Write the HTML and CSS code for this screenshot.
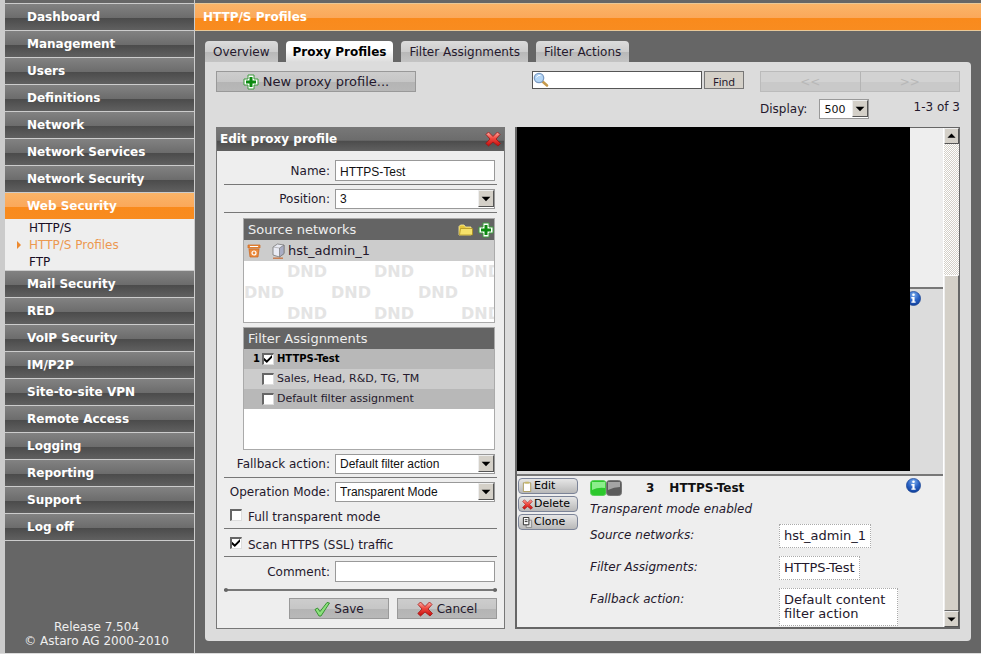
FILE: index.html
```html
<!DOCTYPE html>
<html lang="en">
<head>
<meta charset="utf-8">
<title>HTTP/S Profiles</title>
<link rel="stylesheet" href="styles.css">
</head>
<body>
<svg class="defs" width="0" height="0" aria-hidden="true">
  <defs>
    <linearGradient id="red" x1="0" y1="0" x2="0" y2="1"><stop offset="0" stop-color="#ffb0a8"/><stop offset=".45" stop-color="#f04a40"/><stop offset="1" stop-color="#c40c0c"/></linearGradient>
    <radialGradient id="blue" cx=".5" cy=".25" r=".8"><stop offset="0" stop-color="#7fb0ee"/><stop offset=".5" stop-color="#2a62c4"/><stop offset="1" stop-color="#0c3a94"/></radialGradient>
    <symbol id="plus" viewBox="0 0 16 16"><path d="M5 1h6v4h4v6h-4v4H5v-4H1V5h4z" fill="#fff" stroke="#3c9a3c"/><path d="M6.500 3h3v3.500H13v3H9.500V13h-3V9.500H3v-3h3.500z" fill="#0c8a10"/></symbol>
    <symbol id="cross" viewBox="0 0 16 16"><path d="M1 3.500 3.500 1 8 5.500 12.500 1 15 3.500 11 8l4.500 4.500-2.500 2.500L8 11l-4.500 4L.8 12.500 5 8z" fill="url(#red)" stroke="#a01414" stroke-width=".8" stroke-linejoin="round"/></symbol>
    <symbol id="info" viewBox="0 0 14 14"><circle cx="7" cy="7" r="6.600" fill="url(#blue)" stroke="#123f90" stroke-width=".6"/><circle cx="7" cy="3.500" r="1.200" fill="#fff"/><path d="M5 5.700h3v4h1v1.200H5V9.700h1V6.900H5z" fill="#fff"/></symbol>
    <symbol id="arrow" viewBox="0 0 16 16"><path d="M3 6h10l-5 5z" fill="#000"/></symbol>
  </defs>
</svg>
<div class="app">
  <nav class="sidebar">
    <ul class="menu">
      <li><a href="#">Dashboard</a></li>
      <li><a href="#">Management</a></li>
      <li><a href="#">Users</a></li>
      <li><a href="#">Definitions</a></li>
      <li><a href="#">Network</a></li>
      <li><a href="#">Network Services</a></li>
      <li><a href="#">Network Security</a></li>
      <li><a href="#" class="current">Web Security</a>
        <ul class="submenu">
          <li><a href="#">HTTP/S</a></li>
          <li><a href="#" class="active">HTTP/S Profiles</a></li>
          <li><a href="#">FTP</a></li>
        </ul>
      </li>
      <li><a href="#">Mail Security</a></li>
      <li><a href="#">RED</a></li>
      <li><a href="#">VoIP Security</a></li>
      <li><a href="#">IM/P2P</a></li>
      <li><a href="#">Site-to-site VPN</a></li>
      <li><a href="#">Remote Access</a></li>
      <li><a href="#">Logging</a></li>
      <li><a href="#">Reporting</a></li>
      <li><a href="#">Support</a></li>
      <li><a href="#">Log off</a></li>
    </ul>
    <footer class="release">Release 7.504<br>© Astaro AG 2000-2010</footer>
  </nav>
  <main class="main">
    <h1 class="title">HTTP/S Profiles</h1>
    <nav class="tabs">
      <a href="#">Overview</a>
      <a href="#" class="selected">Proxy Profiles</a>
      <a href="#">Filter Assignments</a>
      <a href="#">Filter Actions</a>
    </nav>
    <section class="panel">
      <div class="toolbar">
        <button class="btn new" type="button"><svg class="ico"><use href="#plus"/></svg>New proxy profile...</button>
        <form class="search">
          <span class="searchbox">
            <svg viewBox="0 0 16 16"><path d="m9.500 9.500 4.500 4" stroke="#c69a4c" stroke-width="2.600" stroke-linecap="round"/><circle cx="6" cy="6" r="4.700" fill="#b4d6f6" stroke="#7c9cc4" stroke-width="1.300"/><path d="M3.500 5.500q1-2.500 4-2.200" fill="none" stroke="#fff"/></svg>
            <input type="text" aria-label="Search">
          </span>
          <button type="submit">Find</button>
        </form>
        <div class="paging">
          <div class="pager"><button type="button" disabled>&lt;&lt;</button><button type="button" disabled>&gt;&gt;</button></div>
          <div class="display">
            <label for="display">Display:</label>
            <span class="select small"><select id="display"><option>500</option></select><svg><use href="#arrow"/></svg></span>
            <span class="count">1-3 of 3</span>
          </div>
        </div>
      </div>
      <div class="columns">
        <form class="edit">
          <header class="edit-head"><h2>Edit proxy profile</h2><button type="button" aria-label="Close"><svg class="ico"><use href="#cross"/></svg></button></header>
          <div class="edit-body">
            <div class="row"><label for="name">Name:</label><input class="text" id="name" type="text" value="HTTPS-Test"></div>
            <div class="row"><label for="position">Position:</label><span class="select"><select id="position"><option>3</option></select><svg><use href="#arrow"/></svg></span></div>
            <div class="boxes">
              <section class="box">
                <header><h3>Source networks</h3>
                  <button type="button" aria-label="Browse"><svg class="ico" viewBox="0 0 16 16"><path d="M1 13V4.500L2.500 3H6l1.500 2H13v8z" fill="#e4c63c" stroke="#fff3a0" stroke-width=".8"/><path d="M1.500 13 2.500 6.500h12V13z" fill="#f6e26a" stroke="#a88a18" stroke-width=".7"/></svg></button>
                  <button type="button" aria-label="Add"><svg class="ico"><use href="#plus"/></svg></button>
                </header>
                <div class="net">
                  <svg class="ico" viewBox="0 0 16 16"><path d="M2 2h12v3H2zM3 6h10l-1 8H4z" fill="#ec8a3c" stroke="#c8641c" stroke-width=".7"/><path d="M4 3.500h8" stroke="#fff" stroke-width="1"/><circle cx="8" cy="10" r="2" fill="none" stroke="#fff" stroke-width="1.200"/></svg>
                  <svg class="ico host" viewBox="0 0 16 16"><path d="M3 4 7.500 1 14 2v8.500L9.500 14 3 12z" fill="#e9ebf4" stroke="#777" stroke-width=".8"/><path d="M9.500 5 14 2v8.500L9.500 14z" fill="#a9adc4" stroke="#777" stroke-width=".7"/><path d="m3 4 6.500 1" fill="none" stroke="#999" stroke-width=".6"/><path d="M3 15.200h10" stroke="#c87848" stroke-width="1.400"/></svg>
                  <span>hst_admin_1</span>
                </div>
                <div class="drop" aria-hidden="true">
                  <p class="shift"><b>DND</b><b>DND</b><b>DND</b></p>
                  <p><b>DND</b><b>DND</b><b>DND</b></p>
                  <p class="shift"><b>DND</b><b>DND</b><b>DND</b></p>
                </div>
              </section>
              <section class="box filters">
                <header><h3>Filter Assignments</h3></header>
                <ul>
                  <li class="on"><span class="num">1</span><input type="checkbox" id="f1" checked><label for="f1">HTTPS-Test</label></li>
                  <li><span class="num"></span><input type="checkbox" id="f2"><label for="f2">Sales, Head, R&amp;D, TG, TM</label></li>
                  <li><span class="num"></span><input type="checkbox" id="f3"><label for="f3">Default filter assignment</label></li>
                </ul>
              </section>
            </div>
            <div class="row"><label for="fallback">Fallback action:</label><span class="select"><select id="fallback"><option>Default filter action</option></select><svg><use href="#arrow"/></svg></span></div>
            <div class="row plain"><label for="mode">Operation Mode:</label><span class="select"><select id="mode"><option>Transparent Mode</option></select><svg><use href="#arrow"/></svg></span></div>
            <div class="check"><input type="checkbox" id="full"><label for="full">Full transparent mode</label></div>
            <div class="check"><input type="checkbox" id="scan" checked><label for="scan">Scan HTTPS (SSL) traffic</label></div>
            <div class="row plain"><label for="comment">Comment:</label><input class="text" id="comment" type="text"></div>
            <div class="rule"></div>
            <div class="actions">
              <button class="btn" type="submit"><svg class="ico" viewBox="0 0 16 16"><path d="M1 8.500 3.500 7 6 10.500 13 1.500l2.500.5L7 15H5z" fill="#8be07c" stroke="#2c8a28" stroke-width=".9" stroke-linejoin="round"/></svg>Save</button>
              <button class="btn" type="button"><svg class="ico"><use href="#cross"/></svg>Cancel</button>
            </div>
          </div>
        </form>
        <section class="list">
          <div class="items">
            <article class="item first"></article>
            <article class="item second"><svg class="info"><use href="#info"/></svg></article>
            <article class="item third">
              <div class="tools">
                <button type="button"><svg viewBox="0 0 12 12"><path d="M1.500 2h8v9.500h-8z" fill="#fff" stroke="#a89858"/><path d="M3.500.8h4v2h-4z" fill="#c8b868"/></svg>Edit</button>
                <button type="button"><svg viewBox="0 0 16 16"><use href="#cross"/></svg>Delete</button>
                <button type="button"><svg viewBox="0 0 12 12"><path d="M4.500 3.500h6v8h-6z" fill="#ddd" stroke="#888"/><path d="M1.500.5h6v8h-6z" fill="#fff" stroke="#222"/><path d="M3 3h3M3 5h3" stroke="#222"/></svg>Clone</button>
              </div>
              <div class="details">
                <div class="heading">
                  <svg class="toggle" viewBox="0 0 32 16"><rect x=".5" y=".5" width="15.500" height="15" rx="3" fill="#2cc82c" stroke="#5ad05a"/><path d="M2 2h13v6q-7-1-13 2z" fill="#8cee8c"/><rect x="16.500" y=".5" width="15" height="15" rx="3" fill="#5c5c5c" stroke="#777"/><path d="M18 2h12v5q-6 0-12 3z" fill="#a4a4a4"/></svg>
                  <span class="idx">3</span><h3>HTTPS-Test</h3>
                </div>
                <p class="mode">Transparent mode enabled</p>
                <dl>
                  <dt>Source networks:</dt><dd><span>hst_admin_1</span></dd>
                  <dt>Filter Assigments:</dt><dd><span>HTTPS-Test</span></dd>
                  <dt>Fallback action:</dt><dd><span>Default content<br>filter action</span></dd>
                </dl>
              </div>
              <svg class="info"><use href="#info"/></svg>
            </article>
            <div class="mask"></div>
          </div>
          <div class="scrollbar" aria-hidden="true">
            <span class="cap"><svg class="up"><use href="#arrow"/></svg></span>
            <span class="track"></span>
            <span class="thumb"></span>
            <span class="cap"><svg><use href="#arrow"/></svg></span>
          </div>
        </section>
      </div>
    </section>
  </main>
</div>
</body>
</html>
```
FILE: styles.css
```css
* { box-sizing: border-box; }
body, h1, h2, h3, ul, p, dl, dd { margin: 0; padding: 0; }
body {
  background: #cbcbcb;
  color: #24182c;
  font: 12px/16px "DejaVu Sans", Verdana, sans-serif;
}
ul { list-style: none; }
a { color: inherit; text-decoration: none; }
button, input, select { font: inherit; color: inherit; margin: 0; padding: 0; border: 0; border-radius: 0; }
svg { display: block; flex: none; }
.defs { position: absolute; }
.ico { width: 16px; height: 16px; }

.app { display: flex; min-height: 100vh; padding-left: 5px; border-bottom: 1px solid #dcdcdc; }
.sidebar {
  display: flex; flex-direction: column; justify-content: space-between;
  width: 190px; flex: none;
  padding: 3px 0 5px;
  background: #666;
  border-right: 1px solid #ccc;
}
.menu > li > a {
  display: block; height: 27px; padding-left: 22px;
  border-top: 1px solid #ccc;
  background: linear-gradient(#828282, #6c6c6c 53%, #4b4b4b 54%, #606060);
  color: #fff; font-weight: bold; line-height: 27px;
}
.menu > li > a.current { background: linear-gradient(#fab468, #fba85a 53%, #f98a1c 54%, #f88c20); }
.menu > li:last-child { border-bottom: 1px solid #ccc; }
.submenu { background: #eee; padding-top: 1px; height: 51px; }
.submenu a { display: block; line-height: 17px; padding-left: 24px; color: #180c24; }
.submenu .active { color: #ec9850; }
.submenu .active::before {
  content: ""; float: left; width: 4px; height: 8px; margin: 4px 0 0 -12px;
  background: #ec8a30; clip-path: polygon(0 0, 100% 50%, 0 100%);
}
.release { padding-right: 6px; color: #eee; text-align: center; line-height: 14px; }

.main { flex: 1; min-width: 0; display: flex; flex-direction: column; padding: 3px 0 12px; background: #666; }
.title {
  height: 28px; padding-left: 8px;
  border: solid #e8c898; border-width: 1px 0;
  background: linear-gradient(#fab468, #fba85a 53%, #f98a1c 54%, #f88c20);
  color: #fff; font-size: 12px; line-height: 26px;
}
.tabs { display: flex; gap: 8px; padding: 10px 0 0 10px; }
.tabs a {
  padding: 0 8px; height: 21px; line-height: 23px;
  border-radius: 4px 4px 0 0;
  background: linear-gradient(#dcdcdc, #ccc 52%, #b8b8b8 53%, #c4c4c4);
}
.tabs .selected { padding: 0 7px; background: linear-gradient(#fff 40%, #dcdcdc); color: #000; font-weight: bold; }
.panel {
  flex: 1; margin: 0 10px; padding: 9px 11px 12px;
  border-radius: 0 4px 4px 4px; background: #dcdcdc;
}
.btn {
  display: flex; align-items: center; justify-content: center; gap: 4px;
  height: 21px; border: 1px solid #999;
  background: linear-gradient(#cdcdcd, #c6c6c6 50%, #b4b4b4 51%, #b8b8b8);
}
.toolbar { display: flex; align-items: flex-start; height: 56px; }
.new { width: 200px; font-size: 13px; }
.search { display: flex; gap: 2px; margin-left: auto; }
.searchbox { display: flex; width: 170px; height: 18px; border: 1px solid #555; background: #fff; }
.searchbox svg { width: 16px; height: 16px; }
.searchbox input { flex: 1; min-width: 0; background: none; outline: 0; }
.search button {
  width: 40px; height: 18px; border: 1px solid #777; background: #d4d0c8;
  font: 11px/16px "Noto Sans", sans-serif;
  padding-top: 2px;
}
.paging { width: 200px; margin-left: 16px; }
.pager { display: flex; border: 1px solid #bbb; height: 21px; }
.pager button { flex: 1; background: linear-gradient(#d2d2d2 50%, #c9c9c9 51%); color: #b8b8b8; }
.pager button + button { border-left: 1px solid #b4b4b4; }
.display { display: flex; margin-top: 7px; }
.display label { line-height: 20px; }
.display .select { margin-left: 12px; }
.count { margin-left: auto; }

.select { position: relative; width: 160px; height: 20px; border: 1px solid #999; background: #fff; }
.select select { appearance: none; width: 100%; height: 18px; padding-left: 4px; background: none; font: 12px "Liberation Sans", Arial, sans-serif; color: #111; }
.select.small { width: 50px; }
.select.small select { font-family: "DejaVu Sans", sans-serif; font-size: 11px; }
.select svg, .cap {
  width: 16px; height: 17px; background: #d4d0c8;
  border: 1px solid; border-color: #eee #555 #555 #eee;
}
.select svg { position: absolute; right: 0; top: 0; pointer-events: none; }
.text { width: 160px; height: 21px; border: 1px solid #999; padding: 2px 4px 0; background: #fff; font: 12px "Liberation Sans", Arial, sans-serif; color: #111; }

.columns { display: flex; gap: 10px; }
.edit { flex: none; width: 289px; border: solid #777; border-width: 0 1px 1px; background: #eee; }
.edit-head {
  display: flex; align-items: center; justify-content: space-between;
  height: 24px; padding: 0 3px;
  background: linear-gradient(#787878, #6c6c6c 56%, #4b4b4b 57%, #606060);
  color: #fff;
}
.edit-head h2 { font-size: 12px; }
.box h3 { font-size: 13px; font-weight: normal; }
.edit button:not(.btn) { background: none; }
.edit-body { padding: 4px 7px 9px; }
.row {
  display: flex; align-items: center; justify-content: flex-end; gap: 5px;
  padding: 4px 2px 3px 0; border-bottom: 1px solid #777;
}
.row:first-child { padding-top: 5px; }
.row.plain { border: 0; }
.boxes { padding: 5px 2px 0 19px; display: grid; gap: 4px; }
.box { border: 1px solid #aaa; background: #fff; height: 105px; overflow: hidden; }
.box header { display: flex; align-items: center; gap: 4px; height: 21px; padding: 0 0 0 4px; background: #646464; color: #eee; }
.box header h3 { margin-right: auto; }
.net { display: flex; align-items: center; height: 21px; padding-left: 2px; background: #ccc; font-size: 13px; }
.host { margin: 0 2px 0 8px; }
.drop { color: #e4e4e4; font-size: 16px; line-height: 21px; }
.drop p { display: flex; gap: 45px; }
.drop b { flex: none; width: 42px; }
.drop .shift { padding-left: 43px; }
.filters { height: 123px; }
.filters li { display: flex; align-items: center; height: 20px; background: #ccc; font-size: 11px; }
.filters li:nth-child(odd) { background: #b8b8b8; }
.filters .on { font-size: 10px; font-weight: bold; color: #000; }
.filters .num { width: 18px; padding-right: 2px; text-align: right; }
.filters label { padding-left: 3px; }
input[type="checkbox"] {
  appearance: none; width: 12px; height: 12px; background: #fff;
  border: solid; border-width: 2px 1px 1px 2px; border-color: #666 #ddd #ddd #666;
}
input[type="checkbox"]:checked::after {
  content: ""; display: block; width: 8px; height: 8px; background: #000;
  clip-path: polygon(0 35%, 35% 65%, 100% 0, 100% 35%, 35% 100%, 0 70%);
}
.check { display: flex; gap: 6px; padding: 4px 0 3px 6px; height: 24px; border-bottom: 1px solid #777; }
.check + .check { height: 28px; padding-top: 8px; }
.rule { position: relative; height: 2px; margin-top: 4px; background: #777; }
.rule::before, .rule::after { content: ""; position: absolute; top: -1px; width: 4px; height: 4px; border-radius: 2px; background: #666; }
.rule::after { right: 0; }
.actions { display: flex; justify-content: flex-end; gap: 8px; padding-top: 7px; }
.actions .btn { width: 100px; }

.list { display: flex; flex: 1; min-width: 0; border: 1px solid #666; border-width: 1px 1px 2px 2px; }
.items { position: relative; display: flex; flex-direction: column; flex: 1; background: #eee; }
.item { display: flex; justify-content: flex-end; padding-right: 22px; }
.first { height: 161px; border-bottom: 2px solid #777; }
.second { height: 187px; padding-top: 2px; border-bottom: 2px solid #777; background: #dcdcdc; }
.third { flex: 1; justify-content: flex-start; padding-top: 2px; padding-left: 1px; }
.mask { position: absolute; left: 0; top: -1px; right: 33px; height: 344px; background: #000; }
.info { width: 15px; height: 15px; }
.tools { display: grid; gap: 2px; align-content: start; width: 60px; }
.tools button {
  display: flex; align-items: center; gap: 1px; height: 16px; padding-left: 3px;
  border: 1px solid #7c8498; border-radius: 4px;
  background: linear-gradient(#e6e6e6, #b8b8b8); color: #000; font-size: 11px;
}
.tools svg { width: 11px; height: 11px; }
.details { flex: 1; padding-left: 12px; }
.heading { display: flex; align-items: center; height: 20px; color: #111; }
.heading h3, .idx { font-size: 12px; font-weight: bold; }
.toggle { width: 32px; height: 16px; }
.idx { margin: 0 15px 0 24px; }
.mode, dt { font-style: italic; }
.mode { padding-top: 3px; }
dl { display: grid; grid-template-columns: 189px auto; row-gap: 8px; padding-top: 7px; }
dt { line-height: 22px; }
dd { font-size: 13px; }
dd span { display: inline-block; vertical-align: top; min-height: 24px; padding: 4px; border: 1px dotted #aaa; background: #fff; line-height: 14px; }
dd:last-child span { padding-right: 12px; }

.scrollbar { display: flex; flex-direction: column; width: 16px; flex: none; border-left: 1px solid #fff; }
.cap { flex: none; height: 16px; width: 15px; }
.cap svg { width: 13px; height: 14px; }
.up { transform: rotate(180deg); }
.track { flex: 132; background: repeating-conic-gradient(#d4d0c8 0 25%, #fff 0 50%) 0 0 / 2px 2px; }
.thumb { flex: 336; background: #d4d0c8; border: 1px solid; border-color: #fff #666 #666 #eee; }
```
